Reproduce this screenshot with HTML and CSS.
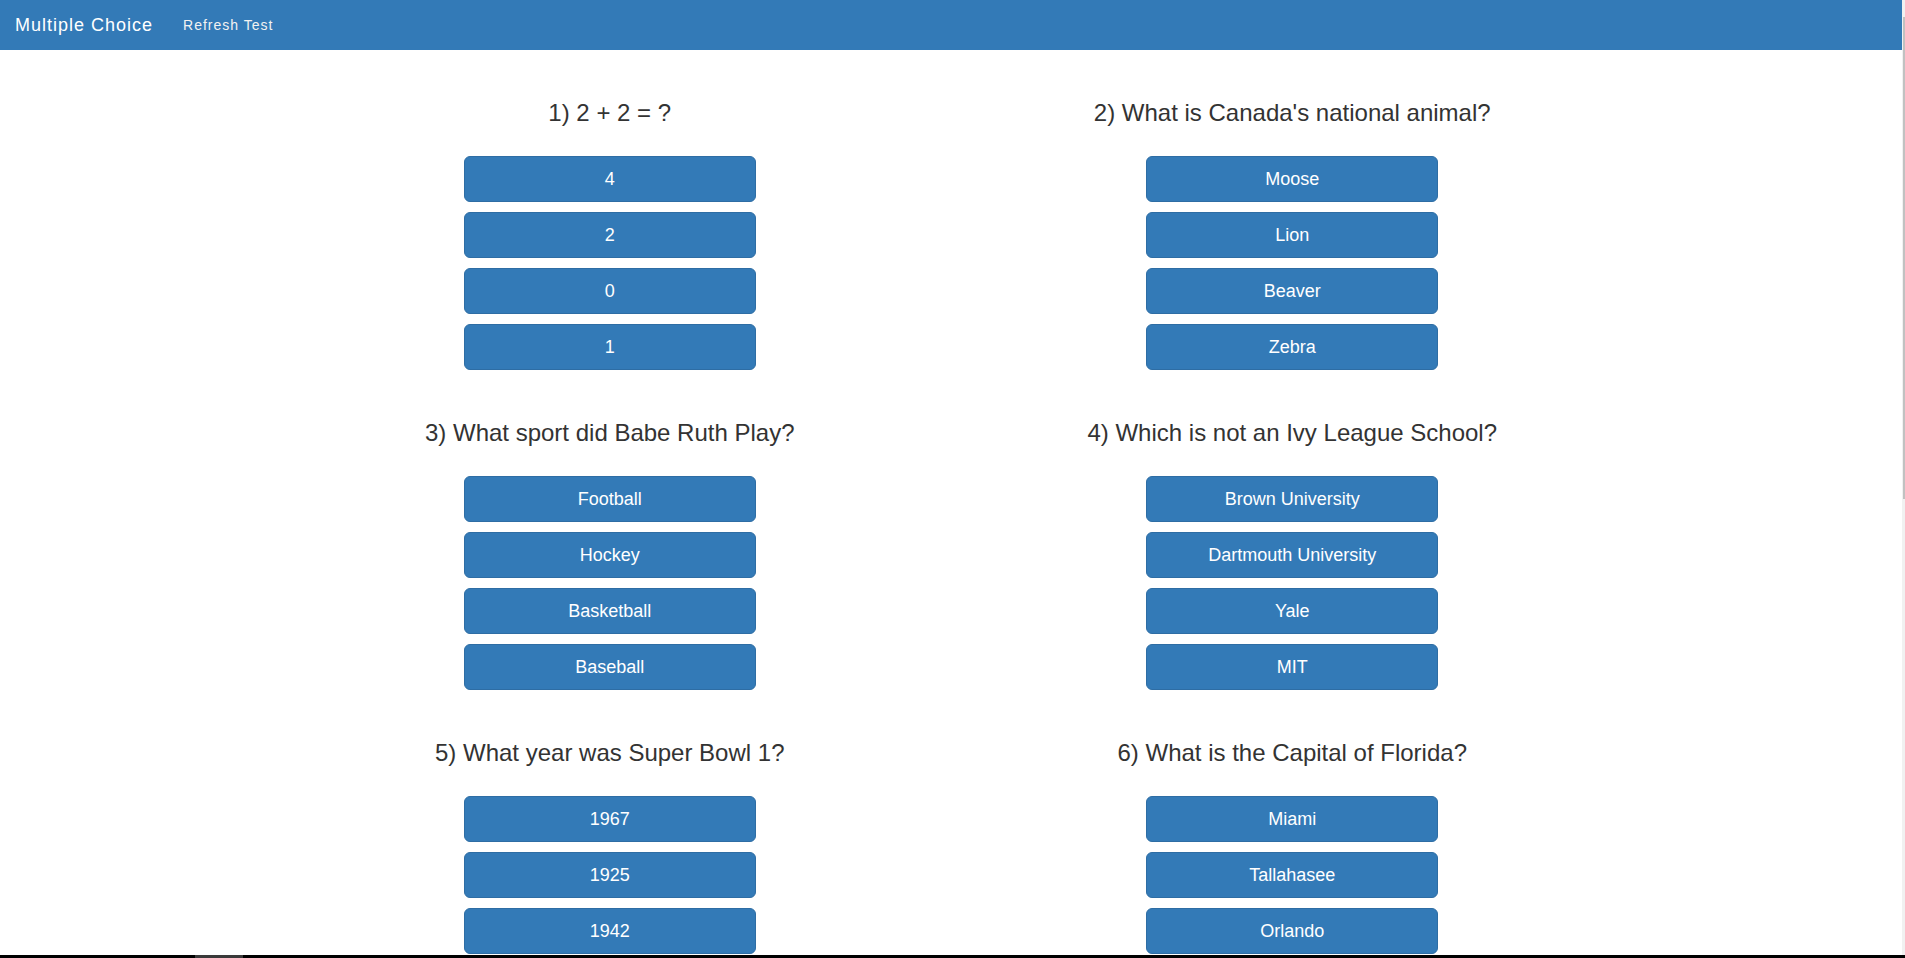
FILE: index.html
```html
<!DOCTYPE html>
<html lang="en">
<head>
<meta charset="utf-8">
<title>Multiple Choice</title>
<link rel="stylesheet" href="styles.css">
</head>
<body>
<nav class="navbar">
  <a class="brand" href="#">Multiple Choice</a>
  <a class="nav-link" href="#">Refresh Test</a>
</nav>
<main class="quiz">
  <section class="question">
    <h3>1) 2 + 2 = ?</h3>
    <div class="options">
      <button class="btn">4</button>
      <button class="btn">2</button>
      <button class="btn">0</button>
      <button class="btn">1</button>
    </div>
  </section>
  <section class="question">
    <h3>2) What is Canada's national animal?</h3>
    <div class="options">
      <button class="btn">Moose</button>
      <button class="btn">Lion</button>
      <button class="btn">Beaver</button>
      <button class="btn">Zebra</button>
    </div>
  </section>
  <section class="question">
    <h3>3) What sport did Babe Ruth Play?</h3>
    <div class="options">
      <button class="btn">Football</button>
      <button class="btn">Hockey</button>
      <button class="btn">Basketball</button>
      <button class="btn">Baseball</button>
    </div>
  </section>
  <section class="question">
    <h3>4) Which is not an Ivy League School?</h3>
    <div class="options">
      <button class="btn">Brown University</button>
      <button class="btn">Dartmouth University</button>
      <button class="btn">Yale</button>
      <button class="btn">MIT</button>
    </div>
  </section>
  <section class="question">
    <h3>5) What year was Super Bowl 1?</h3>
    <div class="options">
      <button class="btn">1967</button>
      <button class="btn">1925</button>
      <button class="btn">1942</button>
      <button class="btn">1971</button>
    </div>
  </section>
  <section class="question">
    <h3>6) What is the Capital of Florida?</h3>
    <div class="options">
      <button class="btn">Miami</button>
      <button class="btn">Tallahasee</button>
      <button class="btn">Orlando</button>
      <button class="btn">Tampa</button>
    </div>
  </section>
</main>
<div class="vscroll"><div class="vthumb"></div></div>
<div class="hscroll"><div class="hthumb"></div></div>
</body>
</html>
```

FILE: styles.css
```css
html, body {
  margin: 0;
  padding: 0;
}
body {
  font-family: "Liberation Sans", Arial, Helvetica, sans-serif;
  font-size: 14px;
  color: #333;
  background: #fff;
  padding-right: 3px;
  overflow: hidden;
}
.navbar {
  display: flex;
  align-items: center;
  height: 50px;
  background: #337ab7;
  letter-spacing: 1px;
}
.brand {
  padding: 15px;
  font-size: 18px;
  line-height: 20px;
  color: #fff;
  text-decoration: none;
}
.nav-link {
  padding: 15px;
  font-size: 14px;
  line-height: 20px;
  color: #f2f2f2;
  text-decoration: none;
}
.quiz {
  width: 1365px;
  margin: 0 auto;
  display: grid;
  grid-template-columns: 1fr 1fr;
}
.question {
  text-align: center;
  padding-top: 50px;
}
.question h3 {
  margin: 0 0 30px;
  font-size: 24px;
  font-weight: 500;
  line-height: 26px;
  color: #333;
}
.options {
  display: flex;
  flex-direction: column;
  align-items: center;
  gap: 10px;
}
.btn {
  box-sizing: border-box;
  width: 292px;
  height: 46px;
  padding: 10px 16px;
  font-family: "Liberation Sans", Arial, Helvetica, sans-serif;
  font-size: 18px;
  line-height: 24px;
  color: #fff;
  background: #337ab7;
  border: 1px solid #2e6da4;
  border-radius: 6px;
  cursor: pointer;
}
.vscroll {
  position: fixed;
  top: 0;
  right: 0;
  width: 3px;
  height: 100%;
  background: #f1f1f1;
}
.vthumb {
  position: absolute;
  top: 17px;
  left: 1px;
  width: 2px;
  height: 482px;
  background: #c1c1c1;
}
.hscroll {
  position: fixed;
  left: 0;
  bottom: 0;
  width: 100%;
  height: 3px;
  background: #000;
}
.hthumb {
  position: absolute;
  left: 195px;
  top: 0;
  width: 48px;
  height: 3px;
  background: #3a3a3a;
}
```
